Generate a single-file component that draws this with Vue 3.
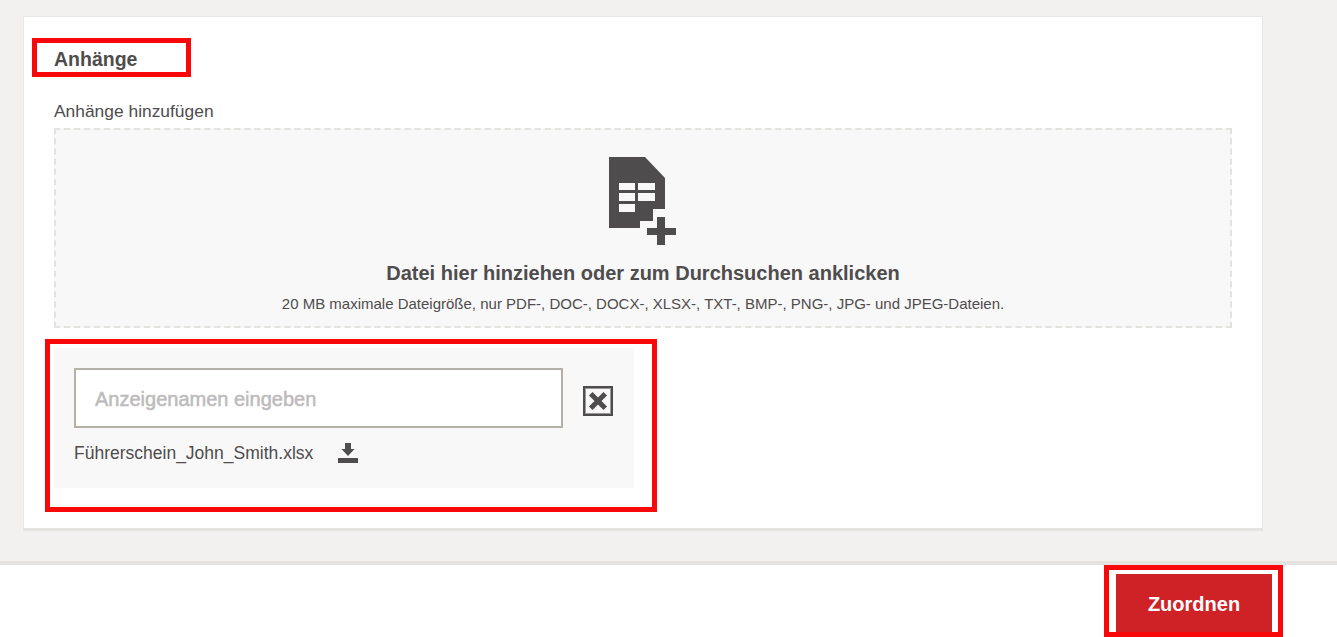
<script setup>
const title = 'Anhänge'
</script>

<template>
  <div class="page">
    <main class="content">
      <section class="card">
        <h2 class="title"><span class="mark mark-title"></span>{{ title }}</h2>
        <label class="label">Anhänge hinzufügen</label>
        <div class="drop">
          <svg class="file-icon" width="67" height="88" viewBox="0 0 67 88">
            <path fill="#4f4c4d" fill-rule="evenodd" d="M0 0H36L56 21V52H44V64H31V71H0Z M10 26V33H26V26Z M29 26V33H46V26Z M10 36V44H26V36Z M29 36V44H46V36Z M10 47V55H26V47Z"/>
            <path fill="#4f4c4d" d="M48 60H56V71H67V78H56V88H48V78H38V71H48Z"/>
          </svg>
          <div class="drop-title">Datei hier hinziehen oder zum Durchsuchen anklicken</div>
          <div class="drop-sub">20 MB maximale Dateigröße, nur PDF-, DOC-, DOCX-, XLSX-, TXT-, BMP-, PNG-, JPG- und JPEG-Dateien.</div>
        </div>
        <div class="file-wrap">
          <span class="mark mark-file"></span>
          <div class="file">
            <div class="file-row">
              <input class="name" type="text" placeholder="Anzeigenamen eingeben" />
              <button class="remove" type="button" aria-label="Entfernen">
                <svg width="30" height="30" viewBox="0 0 30 30">
                  <rect x="1" y="1" width="28" height="28" fill="#f8f8f8" stroke="#4f4c4d" stroke-width="2"/>
                  <rect x="2.500" y="2.500" width="25" height="25" fill="none" stroke="#9a9898" stroke-width="1"/>
                  <path d="M9.500 9.500L20.500 20.500M20.500 9.500L9.500 20.500" stroke="#4f4c4d" stroke-width="5" stroke-linecap="square" fill="none"/>
                </svg>
              </button>
            </div>
            <div class="file-info">
              <span>Führerschein_John_Smith.xlsx</span>
              <svg class="download" width="20" height="20" viewBox="0 0 20 20">
                <path fill="#4f4c4d" d="M7 0H13V6H16.500L10 13L3.500 6H7Z M0 15H20V20H0Z"/>
              </svg>
            </div>
          </div>
        </div>
      </section>
    </main>
    <footer class="footer">
      <div class="btn-wrap">
        <span class="mark mark-btn"></span>
        <button class="assign" type="button">Zuordnen</button>
      </div>
    </footer>
  </div>
</template>

<style>
html, body { margin: 0; background: #fff; }
</style>

<style scoped>
.page {
  width: 1337px;
  height: 637px;
  overflow: hidden;
  display: flex;
  flex-direction: column;
  font-family: "Liberation Sans", Arial, sans-serif;
  color: #4f4c4d;
}
.content {
  height: 545px;
  flex: none;
  background: #f2f1ef;
  padding: 16px 0 0 23px;
  border-bottom: 4px solid #e4e3df;
}
.card {
  width: 1240px;
  height: 515px;
  box-sizing: border-box;
  background: #fff;
  border: 1px solid #e8e7e3;
  border-bottom: 3px solid #e4e3df;
  padding: 28px 30px 0 30px;
}
.title {
  position: relative;
  margin: 0;
  font-size: 19.500px;
  line-height: 28px;
  font-weight: 700;
}
.label {
  display: block;
  margin-top: 27px;
  font-size: 17.400px;
  line-height: 22px;
}
.drop {
  box-sizing: border-box;
  width: 1178px;
  height: 200px;
  margin-top: 6px;
  background: #f8f8f8;
  border: 2px dashed #e4e3df;
  display: flex;
  flex-direction: column;
  align-items: center;
}
.file-icon {
  margin-top: 27px;
  margin-right: 2px;
  display: block;
}
.drop-title {
  margin-top: 15px;
  font-size: 20px;
  line-height: 26px;
  font-weight: 700;
}
.drop-sub {
  margin-top: 8px;
  font-size: 15px;
  line-height: 20px;
}
.file-wrap {
  position: relative;
  margin-top: 20px;
  width: 580px;
}
.file {
  box-sizing: border-box;
  height: 140px;
  background: #f8f8f8;
  padding: 20px;
}
.file-row {
  display: flex;
  align-items: flex-start;
  gap: 20px;
}
.name {
  box-sizing: border-box;
  width: 489px;
  height: 60px;
  border: 2px solid #b5b1a8;
  border-radius: 0;
  background: #fff;
  padding: 2px 20px 0 19px;
  font: 400 20px "Liberation Sans", Arial, sans-serif;
  outline: none;
}
.name::placeholder {
  color: #bdbbbb;
  opacity: 1;
  -webkit-text-stroke: 0.500px #bdbbbb;
}
.remove {
  width: 30px;
  height: 30px;
  margin-top: 18px;
  padding: 0;
  border: 0;
  background: none;
  display: block;
}
.remove svg { display: block; }
.file-info {
  display: flex;
  align-items: center;
  margin-top: 12px;
  font-size: 17.500px;
  line-height: 26px;
}
.download {
  margin-left: 25px;
  display: block;
}
.footer {
  flex: 1;
  display: flex;
  justify-content: flex-end;
  background: #fff;
  padding: 9px 65px 0 0;
}
.btn-wrap {
  position: relative;
  height: 63px;
}
.assign {
  width: 156px;
  height: 63px;
  border: 0;
  border-radius: 0;
  background: #cf2227;
  color: #fff;
  font: 700 20px "Liberation Sans", Arial, sans-serif;
  padding: 0 0 2px;
}
.mark {
  position: absolute;
  box-sizing: border-box;
  border: 5px solid #f80808;
  pointer-events: none;
}
.mark-title { left: -22px; top: -7px; width: 159px; height: 39px; }
.mark-file { left: -9px; top: -9px; width: 612px; height: 173px; }
.mark-btn { left: -12px; top: -9px; width: 179px; height: 72px; }
</style>
